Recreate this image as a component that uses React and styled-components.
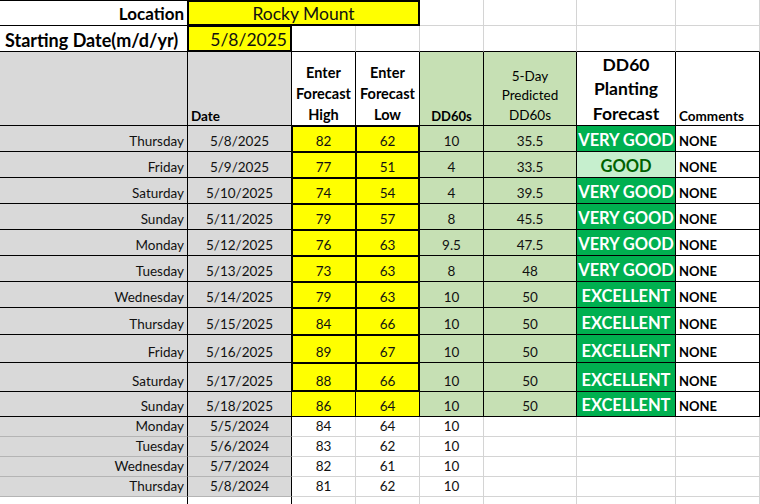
import React from "react";
import styled, { createGlobalStyle } from "styled-components";

const GRID = "#d4d4d4";
const INK = "#000";
const GRAY = "#d9d9d9";
const YELLOW = "#ffff00";
const SAGE = "#c6e0b4";

const GlobalStyle = createGlobalStyle`
  html, body {
    margin: 0;
    padding: 0;
    background: #fff;
    overflow: hidden;
  }
  body {
    font-family: "Lato", "Liberation Sans", sans-serif;
    color: #111;
  }
`;

const Sheet = styled.div`
  display: grid;
  grid-template-columns: 188px 104px 64px 64px 64px 93px 99px 84px;
  grid-template-rows:
    26px 26px 74px repeat(7, 26px) 27px 28px 29px 25px
    repeat(4, 20px) 20px;
  width: 760px;
  height: 504px;
  overflow: hidden;
`;

const thickShadow = (p) => {
  if (!p.$thick) return "none";
  const parts = ["inset 1px 1px 0 #000"];
  if (p.$thickRight) parts.push("inset -1px 0 0 #000");
  if (p.$thickBottom) parts.push("inset 0 -1px 0 #000");
  return parts.join(", ");
};

const Cell = styled.div`
  box-sizing: border-box;
  display: flex;
  align-items: ${(p) => p.$valign || "flex-end"};
  justify-content: ${(p) => p.$align || "center"};
  padding: 0 4px 2px;
  min-width: 0;
  overflow: hidden;
  grid-column: ${(p) => (p.$span ? `span ${p.$span}` : "auto")};
  background: ${(p) => p.$bg || "#fff"};
  border-right: 1px solid ${(p) => p.$right || GRID};
  border-bottom: 1px solid ${(p) => p.$bottom || GRID};
  border-top: ${(p) => (p.$top ? `1px solid ${p.$top}` : "none")};
  box-shadow: ${thickShadow};
  font-size: 13.5px;
  line-height: 16px;
  white-space: nowrap;
`;

const LabelCell = styled(Cell)`
  font-size: ${(p) => p.$size || 17}px;
  font-weight: 700;
  color: #000;
  padding: 0 3px 3px 5px;
`;

const TitleCell = styled(Cell)`
  background: ${YELLOW};
  font-size: 17.5px;
  padding: 0 4px 3px;
`;

const HeadCell = styled(Cell)`
  font-weight: 700;
  color: #000;
  padding: 0 3px 1px;
`;

const HeadText = styled.span`
  display: block;
  text-align: center;
  font-size: ${(p) => p.$size || 14.5}px;
  font-weight: ${(p) => (p.$light ? 400 : 700)};
  line-height: ${(p) => p.$lh || 16}px;
  margin-bottom: ${(p) => p.$drop || 0}px;
`;

const DayCell = styled(Cell)`
  justify-content: flex-end;
  padding-right: 3px;
  background: ${(p) => p.$bg || GRAY};
`;

const InputCell = styled(Cell)`
  background: ${YELLOW};
`;

const CalcCell = styled(Cell)`
  background: ${SAGE};
`;

const RatingCell = styled(Cell)`
  padding: 0 2px 3px;
  font-size: 16.5px;
  font-weight: 700;
  letter-spacing: -0.1px;
  background: ${(p) => (p.$good ? "#c6efce" : "#00b050")};
  color: ${(p) => (p.$good ? "#006100" : "#fff")};
`;

const CommentCell = styled(Cell)`
  justify-content: flex-start;
  padding-left: 3px;
  font-weight: 700;
  font-size: 13px;
  color: #000;
`;

const forecast = [
  ["Thursday", "5/8/2025", 82, 62, "10", "35.5", "VERY GOOD"],
  ["Friday", "5/9/2025", 77, 51, "4", "33.5", "GOOD"],
  ["Saturday", "5/10/2025", 74, 54, "4", "39.5", "VERY GOOD"],
  ["Sunday", "5/11/2025", 79, 57, "8", "45.5", "VERY GOOD"],
  ["Monday", "5/12/2025", 76, 63, "9.5", "47.5", "VERY GOOD"],
  ["Tuesday", "5/13/2025", 73, 63, "8", "48", "VERY GOOD"],
  ["Wednesday", "5/14/2025", 79, 63, "10", "50", "EXCELLENT"],
  ["Thursday", "5/15/2025", 84, 66, "10", "50", "EXCELLENT"],
  ["Friday", "5/16/2025", 89, 67, "10", "50", "EXCELLENT"],
  ["Saturday", "5/17/2025", 88, 66, "10", "50", "EXCELLENT"],
  ["Sunday", "5/18/2025", 86, 64, "10", "50", "EXCELLENT"],
];

const history = [
  ["Monday", "5/5/2024", 84, 64, "10"],
  ["Tuesday", "5/6/2024", 83, 62, "10"],
  ["Wednesday", "5/7/2024", 82, 61, "10"],
  ["Thursday", "5/8/2024", 81, 62, "10"],
];

const Blanks = ({ count, bottom }) =>
  Array.from({ length: count }).map((_, i) => <Cell key={i} $bottom={bottom} />);

const App = () => {
  const lastThick = forecast.length - 2;

  return (
    <>
      <GlobalStyle />
      <Sheet>
        {/* location row */}
        <LabelCell $align="flex-end" $right={INK} $bottom={INK} $top={INK}>
          Location
        </LabelCell>
        <TitleCell $span={3} $right={INK} $bottom={INK} $top={INK} $thick $thickRight $thickBottom>
          Rocky Mount
        </TitleCell>
        <Blanks count={4} />

        {/* start date row */}
        <LabelCell $size={18} $align="flex-start" $right={INK} $bottom={INK}>
          Starting Date(m/d/yr)
        </LabelCell>
        <TitleCell $align="flex-end" $right={INK} $bottom={INK} $thick $thickRight $thickBottom>
          5/8/2025
        </TitleCell>
        <Blanks count={6} bottom={INK} />

        {/* column headers */}
        <HeadCell $bg={GRAY} $right={INK} $bottom={INK} />
        <HeadCell $bg={GRAY} $align="flex-start" $right={INK} $bottom={INK}>
          <HeadText $size={13.5}>Date</HeadText>
        </HeadCell>
        <HeadCell $right={INK} $bottom={INK}>
          <HeadText $lh={21} $drop={-1}>Enter<br />Forecast<br />High</HeadText>
        </HeadCell>
        <HeadCell $right={INK} $bottom={INK}>
          <HeadText $lh={21} $drop={-1}>Enter<br />Forecast<br />Low</HeadText>
        </HeadCell>
        <HeadCell $bg={SAGE} $right={INK} $bottom={INK}>
          <HeadText $size={13}>DD60s</HeadText>
        </HeadCell>
        <HeadCell $bg={SAGE} $right={INK} $bottom={INK}>
          <HeadText $light $size={13.5} $lh={19.5} $drop={-1}>5-Day<br />Predicted<br />DD60s</HeadText>
        </HeadCell>
        <HeadCell $right={INK} $bottom={INK}>
          <HeadText $size={17.5} $lh={24.5} $drop={-2}>DD60<br />Planting<br />Forecast</HeadText>
        </HeadCell>
        <HeadCell $align="flex-start" $right={INK} $bottom={INK}>
          <HeadText $size={13.5}>Comments</HeadText>
        </HeadCell>

        {/* forecast rows */}
        {forecast.map(([day, date, high, low, dd, pred, rating], i) => {
          const thick = i <= lastThick;
          return (
            <React.Fragment key={date}>
              <DayCell $right={INK} $bottom={INK}>{day}</DayCell>
              <Cell $bg={GRAY} $right={INK} $bottom={INK}>{date}</Cell>
              <InputCell $right={INK} $bottom={INK} $thick={thick} $thickBottom={i === lastThick}>
                {high}
              </InputCell>
              <InputCell
                $right={INK}
                $bottom={INK}
                $thick={thick}
                $thickRight={thick}
                $thickBottom={i === lastThick}
              >
                {low}
              </InputCell>
              <CalcCell $right={INK} $bottom={INK}>{dd}</CalcCell>
              <CalcCell $right={INK} $bottom={INK}>{pred}</CalcCell>
              <RatingCell $good={rating === "GOOD"} $right={INK} $bottom={INK}>
                {rating}
              </RatingCell>
              <CommentCell $right={INK} $bottom={INK}>NONE</CommentCell>
            </React.Fragment>
          );
        })}

        {/* last year's observations */}
        {history.map(([day, date, high, low, dd]) => (
          <React.Fragment key={date}>
            <DayCell $right={INK} $bottom="#b4b4b4">{day}</DayCell>
            <Cell $bg={GRAY} $right={INK} $bottom="#b4b4b4">{date}</Cell>
            <Cell>{high}</Cell>
            <Cell>{low}</Cell>
            <Cell>{dd}</Cell>
            <Blanks count={3} />
          </React.Fragment>
        ))}

        <Cell $right={INK} />
        <Cell $right={INK} />
        <Blanks count={6} />
      </Sheet>
    </>
  );
};

export default App;
